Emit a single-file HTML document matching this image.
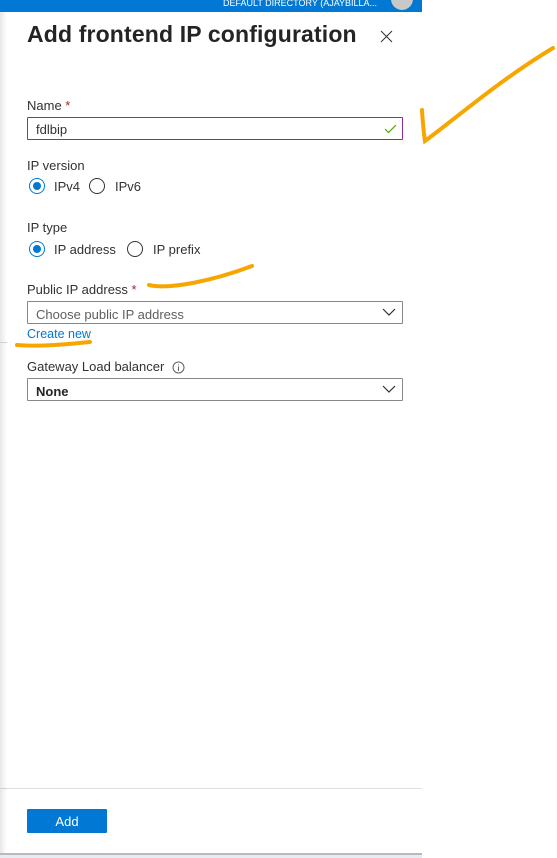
<!DOCTYPE html>
<html><head><meta charset="utf-8"><style>
*{box-sizing:border-box;margin:0;padding:0}
body{width:557px;height:858px;background:#fff;font-family:"Segoe UI","Liberation Sans",sans-serif;color:#323130;position:relative;overflow:hidden}
.top{position:absolute;left:0;top:0;width:422px;height:12px;background:#0078d4;color:#fff;font-size:9px;line-height:8px;overflow:hidden}
.top span{position:absolute;left:223px;top:-1px}
.av{position:absolute;left:391px;top:-12px;width:22px;height:22px;border-radius:50%;background:#c8c8c8}
.shadow{position:absolute;left:0;top:12px;width:7px;height:841px;background:linear-gradient(to right,#e6e6e6,#f6f6f6 60%,#fff)}
.leftline{position:absolute;left:0;width:7px;height:1px;background:#d0d0d0}
.t{position:absolute;font-size:13px;white-space:nowrap}
h1{position:absolute;left:27px;top:21px;font-size:23px;font-weight:600;color:#252423;white-space:nowrap;letter-spacing:0.15px}
.x{position:absolute;left:380px;top:30px}
.req{color:#a4262c}
.box{position:absolute;left:27px;width:376px;height:23px;border:1px solid #8a8886;border-radius:1px}
.radio{position:absolute;width:16px;height:16px;border:1px solid #323130;border-radius:50%}
.radio.on{border-color:#0078d4}
.radio.on:after{content:"";position:absolute;left:3px;top:3px;width:8px;height:8px;border-radius:50%;background:#0078d4}
.chev{position:absolute;right:6px;top:6px}
</style></head><body>
<div class="top"><span>DEFAULT DIRECTORY (AJAYBILLA...</span><div class="av"></div></div>
<div class="shadow"></div>
<div class="leftline" style="top:342px"></div>
<div class="leftline" style="top:788px"></div>
<h1>Add frontend IP configuration</h1>
<svg class="x" width="13" height="13" viewBox="0 0 13 13"><path d="M1 1L12 12M12 1L1 12" stroke="#323130" stroke-width="1"/></svg>

<div class="t" style="left:27px;top:98px">Name <span class="req">*</span></div>
<div class="box" style="top:117px;border-color:#8a2da5"><span class="t" style="left:8px;top:4px">fdlbip</span>
<svg style="position:absolute;right:5px;top:6px" width="13" height="10" viewBox="0 0 13 10"><path d="M1 5L4.5 8.5L12 1" stroke="#57a300" stroke-width="1.2" fill="none"/></svg></div>

<div class="t" style="left:27px;top:158px">IP version</div>
<div class="radio on" style="left:29px;top:178px"></div><div class="t" style="left:54px;top:179px">IPv4</div>
<div class="radio" style="left:89px;top:178px"></div><div class="t" style="left:115px;top:179px">IPv6</div>

<div class="t" style="left:27px;top:220px">IP type</div>
<div class="radio on" style="left:29px;top:241px"></div><div class="t" style="left:54px;top:242px">IP address</div>
<div class="radio" style="left:127px;top:241px"></div><div class="t" style="left:153px;top:242px">IP prefix</div>

<div class="t" style="left:27px;top:282px">Public IP address <span class="req">*</span></div>
<div class="box" style="top:301px"><span class="t" style="left:8px;top:5px;color:#605e5c">Choose public IP address</span>
<svg class="chev" width="14" height="9" viewBox="0 0 14 9"><path d="M1 1L7 7L13 1" stroke="#323130" stroke-width="1.2" fill="none"/></svg></div>
<div class="t" style="left:27px;top:327px;color:#0078d4;font-size:12.5px">Create new</div>

<div class="t" style="left:27px;top:359px">Gateway Load balancer</div>
<svg style="position:absolute;left:172px;top:361px" width="13" height="13" viewBox="0 0 13 13"><circle cx="6.5" cy="6.5" r="5.5" stroke="#605e5c" fill="none"/><path d="M6.5 5.5V10M6.5 3.5V4.3" stroke="#605e5c"/></svg>
<div class="box" style="top:378px"><span class="t" style="left:8px;top:5px;font-weight:bold;color:#252423">None</span>
<svg class="chev" width="14" height="9" viewBox="0 0 14 9"><path d="M1 1L7 7L13 1" stroke="#323130" stroke-width="1.2" fill="none"/></svg></div>

<div style="position:absolute;left:7px;top:788px;width:415px;height:1px;background:#e1dfdd"></div>
<div style="position:absolute;left:27px;top:809px;width:80px;height:24px;background:#0078d4;border-radius:1px;color:#fff;font-size:13px;text-align:center;line-height:25px">Add</div>
<div style="position:absolute;left:0;top:853px;width:422px;height:2px;background:#b8b8c0"></div>
<div style="position:absolute;left:0;top:855px;width:422px;height:3px;background:#e6ecf4"></div>

<svg style="position:absolute;left:0;top:0" width="557" height="858">
<g stroke="#f7a600" stroke-width="4" fill="none" stroke-linecap="round">
<path d="M422 110C423 125 424 135 425 141C460 115 500 80 553 48"/>
<path d="M149 285C170 290 215 280 252 266"/>
<path d="M17 345C40 347 70 344 90 342"/>
</g></svg>
</body></html>
